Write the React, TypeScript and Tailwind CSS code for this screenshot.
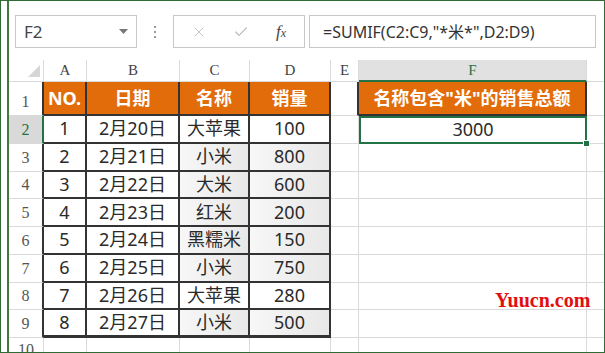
import React from 'react';
import { X, Check } from 'lucide-react';

const rows = [
  { no: 1, date: '2月20日', name: '大苹果', qty: 100 },
  { no: 2, date: '2月21日', name: '小米', qty: 800 },
  { no: 3, date: '2月22日', name: '大米', qty: 600 },
  { no: 4, date: '2月23日', name: '红米', qty: 200 },
  { no: 5, date: '2月24日', name: '黑糯米', qty: 150 },
  { no: 6, date: '2月25日', name: '小米', qty: 750 },
  { no: 7, date: '2月26日', name: '大苹果', qty: 280 },
  { no: 8, date: '2月27日', name: '小米', qty: 500 },
];

const cjk = "font-['Noto_Sans','Noto_Sans_CJK_SC',sans-serif]";
const serif = "font-['Liberation_Serif',serif]";

function RowHead({ n, active, dark }: { n: number; active?: boolean; dark?: boolean }) {
  let cls = 'w-[35px] h-full shrink-0 flex items-end justify-center pb-[1px] text-[16px] border-b border-[#dadada] ';
  if (active) cls += 'bg-[#d9d9d9] text-[#217346] border-r-2 border-r-[#217346]';
  else if (dark) cls += 'bg-white text-[#555] border-r-2 border-r-[#333]';
  else cls += 'bg-white text-[#555] border-r border-r-[#dadada]';
  return <div className={`${cls} ${serif}`}>{n}</div>;
}

function Tail() {
  return (
    <>
      <div className="w-[228px] h-full shrink-0 border-r border-b border-[#dadada]" />
      <div className="flex-1 h-full border-b border-[#dadada]" />
    </>
  );
}

export default function App() {
  const dataCell = `h-full shrink-0 flex items-center justify-center text-[18px] text-[#2a2a2a] border-r-2 border-b-2 border-[#333] ${cjk}`;
  const headCell = `h-full shrink-0 flex items-center justify-center text-[18px] font-bold text-white bg-[#e26b0a] border-r-2 border-b-2 border-[#333] ${cjk}`;

  return (
    <div className="relative w-[605px] h-[353px] overflow-hidden bg-white border border-[#2f6b35] flex">
      <div className="w-[6px] shrink-0" />
      <div className="w-[2px] shrink-0 bg-[#3c7a3f]" />
      <div className="flex-1 flex flex-col min-w-0">
        {/* toolbar */}
        <div className="flex items-center h-[33px] mt-[14px] shrink-0">
          <div className="ml-[6px] w-[122px] h-full border border-[#c8c8c8] flex items-center justify-between pl-[8px] pr-[8px]">
            <span className={`text-[17px] text-[#444] ${cjk}`}>F2</span>
            <svg width="9" height="5" viewBox="0 0 9 5"><path d="M0 0h9L4.5 5z" fill="#777" /></svg>
          </div>
          <div className="w-[36px] flex flex-col items-center gap-[3px]">
            <div className="w-[2px] h-[2px] bg-[#9a9a9a]" />
            <div className="w-[2px] h-[2px] bg-[#9a9a9a]" />
            <div className="w-[2px] h-[2px] bg-[#9a9a9a]" />
          </div>
          <div className="w-[132px] h-full border border-[#c8c8c8] flex items-center">
            <X className="ml-[17px] text-[#bcbcbc]" size={16} strokeWidth={1.3} />
            <Check className="ml-[26px] text-[#bcbcbc]" size={16} strokeWidth={1.8} />
            <span className={`ml-[27px] text-[17px] italic text-[#444] ${serif}`}>f<span className="text-[12px]">x</span></span>
          </div>
          <div className="ml-[4px] mr-[8px] flex-1 h-full border border-[#c8c8c8] flex items-center pl-[13px]">
            <span className={`text-[16px] text-[#333] ${cjk}`}>=SUMIF(C2:C9,"*米*",D2:D9)</span>
          </div>
        </div>

        {/* column headers */}
        <div className={`mt-[12px] h-[22px] shrink-0 flex text-[15px] text-[#444] ${serif}`}>
          <div className="w-[35px] h-full shrink-0 border-r border-b border-[#dadada] flex items-end justify-end pr-[3px] pb-[4px]">
            <svg width="12" height="12" viewBox="0 0 12 12"><path d="M12 0V12H0z" fill="#d6d6d6" /></svg>
          </div>
          <div className="w-[43px] h-full shrink-0 border-r border-b border-[#dadada] flex items-center justify-center">A</div>
          <div className="w-[93px] h-full shrink-0 border-r border-b border-[#dadada] flex items-center justify-center">B</div>
          <div className="w-[70px] h-full shrink-0 border-r border-b border-[#dadada] flex items-center justify-center">C</div>
          <div className="w-[81px] h-full shrink-0 border-r border-b border-[#dadada] flex items-center justify-center">D</div>
          <div className="w-[28px] h-full shrink-0 border-r border-b border-[#dadada] flex items-center justify-center">E</div>
          <div className="w-[228px] h-full shrink-0 bg-[#e1e1e1] text-[#217346] border-r border-[#dadada] border-b-2 border-b-[#217346] flex items-center justify-center">F</div>
          <div className="flex-1 h-full border-b border-[#dadada]" />
        </div>

        {/* row 1 */}
        <div className="h-[34px] shrink-0 flex">
          <RowHead n={1} dark />
          <div className={`w-[43px] ${headCell}`}>NO.</div>
          <div className={`w-[93px] ${headCell}`}>日期</div>
          <div className={`w-[70px] ${headCell}`}>名称</div>
          <div className={`w-[81px] ${headCell}`}>销量</div>
          <div className="w-[28px] h-full shrink-0 border-r-2 border-r-[#333] border-b border-[#dadada]" />
          <div className={`w-[228px] ${headCell}`}>名称包含"米"的销售总额</div>
          <div className="flex-1 h-full border-b border-[#dadada]" />
        </div>

        {/* rows 2-9 */}
        {rows.map((r, i) => {
          const hit = r.name.includes('米');
          const shade = hit ? 'bg-linear-to-r from-[#f7f7f7] to-[#e8e8e8]' : 'bg-white';
          const last = i === rows.length - 1;
          return (
            <div key={r.no} className="h-[27.75px] shrink-0 flex">
              <RowHead n={i + 2} active={i === 0} dark={i !== 0} />
              <div className={`w-[43px] ${dataCell} ${last ? 'border-b-[3px]' : ''}`}>{r.no}</div>
              <div className={`w-[93px] ${dataCell} ${last ? 'border-b-[3px]' : ''}`}>{r.date}</div>
              <div className={`w-[70px] ${dataCell} ${shade} ${last ? 'border-b-[3px]' : ''}`}>{r.name}</div>
              <div className={`w-[81px] ${dataCell} ${shade} ${last ? 'border-b-[3px]' : ''}`}>{r.qty}</div>
              <div className="w-[28px] h-full shrink-0 border-r border-b border-[#dadada]" />
              {i === 0 ? (
                <>
                  <div className={`relative w-[228px] h-full shrink-0 flex items-center justify-center text-[18px] text-[#2a2a2a] shadow-[inset_0_0_0_2px_#217346] ${cjk}`}>
                    3000
                    <div className="absolute z-10 right-[-3px] bottom-[-3px] w-[7px] h-[7px] bg-[#217346] border border-white" />
                  </div>
                  <div className="flex-1 h-full border-b border-[#dadada]" />
                </>
              ) : (
                <Tail />
              )}
            </div>
          );
        })}

        {/* row 10 */}
        <div className="flex-1 flex">
          <RowHead n={10} />
          <div className="w-[43px] h-full shrink-0 border-r border-[#dadada]" />
          <div className="w-[93px] h-full shrink-0 border-r border-[#dadada]" />
          <div className="w-[70px] h-full shrink-0 border-r border-[#dadada]" />
          <div className="w-[81px] h-full shrink-0 border-r border-[#dadada]" />
          <div className="w-[28px] h-full shrink-0 border-r border-[#dadada]" />
          <div className="w-[228px] h-full shrink-0 border-r border-[#dadada]" />
        </div>
      </div>

      <div className={`absolute left-[494px] top-[284px] text-[20px] font-bold text-[#e30f0f] ${serif}`}>Yuucn.com</div>
    </div>
  );
}
